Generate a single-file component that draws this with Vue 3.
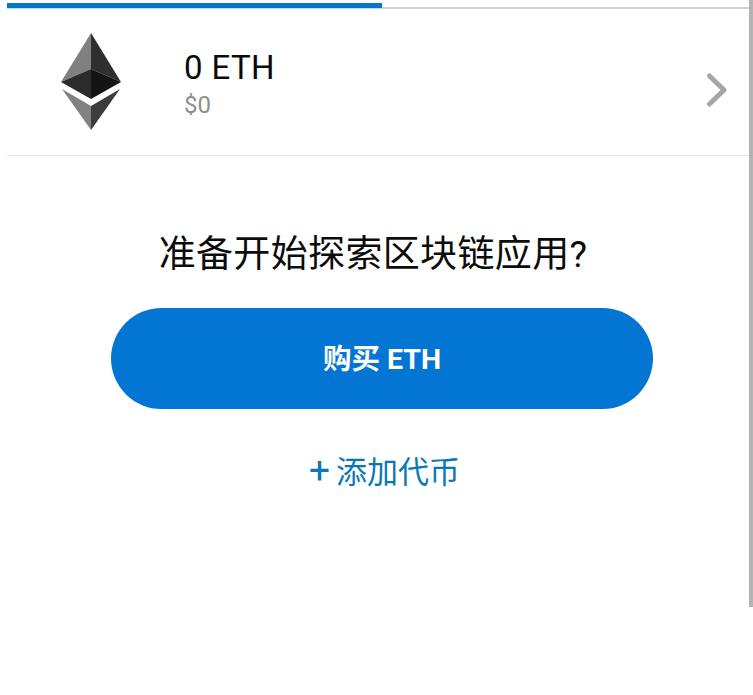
<template>
  <div class="screen">
    <div class="progress">
      <div class="progress-fill"></div>
    </div>

    <div class="asset-row">
      <svg class="eth-logo" width="62" height="98" viewBox="60 32 62 98">
        <polygon points="91,33 61,82 91,69" fill="#808080" />
        <polygon points="91,33 121,82 91,69" fill="#2f2f2f" />
        <polygon points="91,69 61,82 91,99" fill="#2b2b2b" />
        <polygon points="91,69 121,82 91,99" fill="#141414" />
        <polygon points="62,89 91,106 91,130" fill="#828282" />
        <polygon points="120,89 91,106 91,130" fill="#3c3c3c" />
      </svg>
      <div class="asset-text">
        <div class="amount">{{ amount }} ETH</div>
        <div class="fiat">${{ amount }}</div>
      </div>
      <svg class="chevron" width="24" height="36" viewBox="0 0 24 36">
        <polyline points="4.5,4 19,18 4.5,32" fill="none" stroke="#a6a6a6" stroke-width="5" stroke-linecap="round" stroke-linejoin="round" />
      </svg>
    </div>

    <div class="cta">
      <h2 class="title">准备开始探索区块链应用?</h2>
      <button class="buy-btn">购买 ETH</button>
      <a class="add-token"><span class="plus">+</span>添加代币</a>
    </div>

    <div class="scrollbar"></div>
  </div>
</template>

<script setup>
const amount = 0
</script>

<style scoped>
.screen {
  position: relative;
  width: 753px;
  height: 695px;
  overflow: hidden;
  background: #fff;
  padding: 3px 4px 0 7px;
  box-sizing: border-box;
  font-family: Roboto, "Noto Sans CJK SC", sans-serif;
}

.progress {
  height: 6px;
  background: linear-gradient(#fff 0, #fff 4px, #d3d3d3 4px, #d3d3d3 6px);
}

.progress-fill {
  width: 375px;
  height: 5px;
  background: #0376c4;
  border-bottom: 1px solid #b5def5;
}

.asset-row {
  display: flex;
  align-items: center;
  height: 146px;
  border-bottom: 1px solid #e6e6e6;
  padding-left: 53px;
}

.eth-logo {
  flex: none;
  margin-top: -2px;
}

.asset-text {
  margin-left: 62px;
  flex: 1;
  margin-top: 2px;
}

.amount {
  font-size: 33px;
  line-height: 38px;
  letter-spacing: 0.4px;
  color: #0a0a0a;
}

.fiat {
  margin-top: 5px;
  font-size: 24px;
  line-height: 26px;
  color: #8e8e8e;
}

.chevron {
  flex: none;
  margin-right: 20px;
  margin-top: 16px;
}

.cta {
  display: flex;
  flex-direction: column;
  align-items: center;
  width: 750px;
}

.title {
  margin: 77px 18px 0 0;
  font-size: 37px;
  line-height: 44px;
  font-weight: 400;
  letter-spacing: 0.35px;
  color: #0c0c0c;
}

.buy-btn {
  margin-top: 31px;
  width: 542px;
  height: 101px;
  padding: 0 0 4px;
  border: none;
  border-radius: 51px;
  background: #0376d3;
  color: #fff;
  font-family: inherit;
  font-size: 28.5px;
  font-weight: 700;
}

.add-token {
  margin: 43px 0 0 5px;
  font-size: 31px;
  line-height: 40px;
  color: #0a78b8;
}

.plus {
  margin-right: 6px;
  font-size: 37px;
  font-weight: 400;
  line-height: 1;
}

.scrollbar {
  position: absolute;
  top: 0;
  right: 0;
  width: 4px;
  height: 607px;
  background: #b4b4b4;
}
</style>

<style>
html, body {
  margin: 0;
  background: #fff;
}
</style>
